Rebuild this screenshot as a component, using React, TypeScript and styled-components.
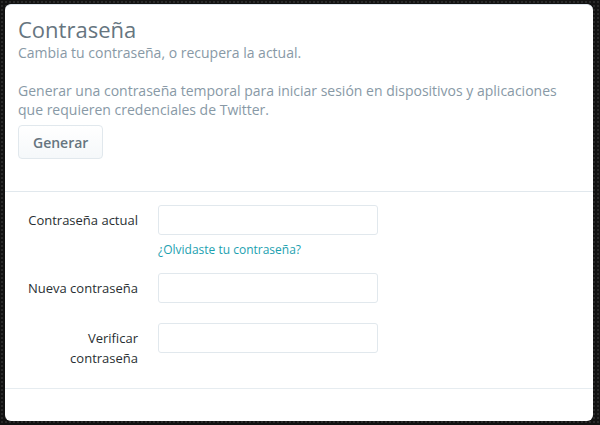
import React from "react";
import styled, { createGlobalStyle } from "styled-components";

const Global = createGlobalStyle`
  html, body { margin: 0; padding: 0; }
  body {
    width: 600px;
    height: 425px;
    overflow: hidden;
    background-color: #121212;
    background-image: radial-gradient(circle, #2a2a2a 1px, transparent 1.5px);
    background-size: 4px 4px;
    font-family: "Open Sans", "Liberation Sans", sans-serif;
  }
`;

const Page = styled.div`
  padding: 4px 7px 4px 5px;
  height: 425px;
  box-sizing: border-box;
  display: flex;
`;

const Card = styled.div`
  flex: 1;
  background: #fff;
  border-radius: 6px;
  border-top: 1px solid #dde6ee;
  display: flex;
  flex-direction: column;
  overflow: hidden;
`;

const Header = styled.div`
  padding: 10px 14px 32px 13px;
  border-bottom: 1px solid #e1e8ed;
`;

const Title = styled.h1`
  margin: 0;
  font-size: 22px;
  font-weight: 400;
  line-height: 28px;
  color: #66757f;
`;

const Sub = styled.p`
  margin: 0;
  font-size: 14px;
  line-height: 19px;
  color: #8899a6;
`;

const Desc = styled(Sub)`
  margin-top: 19px;
`;

const Button = styled.button`
  margin-top: 6px;
  height: 34px;
  padding: 0 14px;
  border: 1px solid #e1e8ed;
  border-radius: 4px;
  background: linear-gradient(#fff, #f5f8fa);
  color: #66757f;
  font-family: inherit;
  font-size: 14px;
  font-weight: 600;
`;

const Form = styled.div`
  padding: 13px 0 20px;
  border-bottom: 1px solid #e6ecf0;
  display: flex;
  flex-direction: column;
  gap: 20px;
`;

const Row = styled.div`
  display: grid;
  grid-template-columns: 133px 220px;
  column-gap: 20px;
  align-items: start;
`;

const Label = styled.label`
  text-align: right;
  font-size: 13px;
  line-height: 20px;
  color: #292f33;
  padding-top: 5px;
`;

const Field = styled.div`
  display: flex;
  flex-direction: column;
`;

const Input = styled.input`
  box-sizing: border-box;
  width: 220px;
  height: 30px;
  border: 1px solid #e1e8ed;
  border-radius: 3px;
  outline: none;
  background: #fff;
`;

const Link = styled.a`
  margin: 7px 0 -5px;
  font-size: 12px;
  line-height: 16px;
  color: #1ca1b0;
  text-decoration: none;
`;

export default function App() {
  return (
    <>
      <Global />
      <Page>
        <Card>
          <Header>
            <Title>Contraseña</Title>
            <Sub>Cambia tu contraseña, o recupera la actual.</Sub>
            <Desc>
              Generar una contraseña temporal para iniciar sesión en dispositivos y aplicaciones
              que requieren credenciales de Twitter.
            </Desc>
            <Button>Generar</Button>
          </Header>
          <Form>
            <Row>
              <Label>Contraseña actual</Label>
              <Field>
                <Input type="password" />
                <Link href="#">¿Olvidaste tu contraseña?</Link>
              </Field>
            </Row>
            <Row>
              <Label>Nueva contraseña</Label>
              <Field>
                <Input type="password" />
              </Field>
            </Row>
            <Row>
              <Label>Verificar<br />contraseña</Label>
              <Field>
                <Input type="password" />
              </Field>
            </Row>
          </Form>
        </Card>
      </Page>
    </>
  );
}
